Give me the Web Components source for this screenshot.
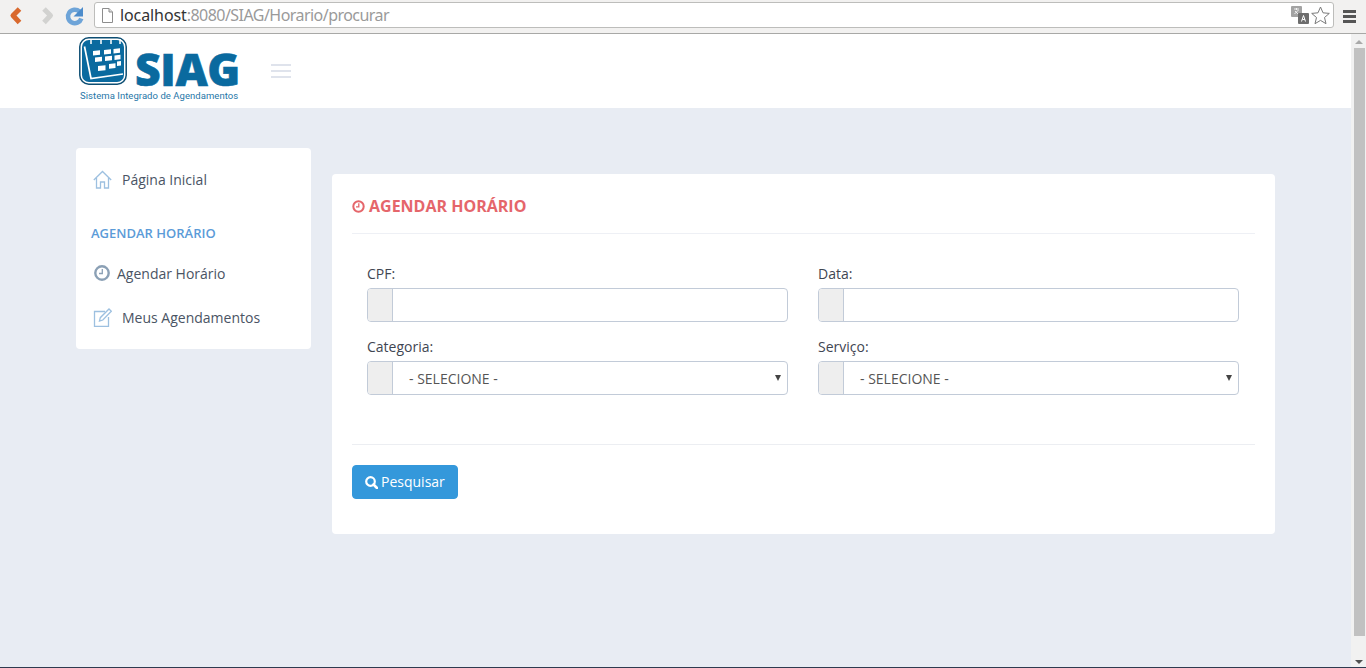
<!DOCTYPE html>
<html lang="pt"><head><meta charset="utf-8"><title>SIAG</title>
<style>
html,body{margin:0;height:668px;overflow:hidden;background:#e8ecf3}
body{display:grid;grid-template-rows:34px 633px 1px;font-family:"Open Sans",sans-serif;font-size:14px;color:#4a5464}
app-shell{min-height:0}
</style></head><body>
<browser-bar></browser-bar>
<app-shell>
  <site-header></site-header>
  <side-nav slot="content"></side-nav>
  <schedule-card slot="content"></schedule-card>
</app-shell>
<div style="background:#2f3a4f"></div>
<script>
function def(name,html){
  customElements.define(name,class extends HTMLElement{
    constructor(){super();this.attachShadow({mode:'open'}).innerHTML=html}
  });
}
def('browser-bar',`<style>
:host{display:flex;align-items:flex-start;height:34px;box-sizing:border-box;background:#f2f1f0;border-bottom:1px solid #a8a8a6}
.nav{width:94px;height:32px;flex:none}
.nav svg{display:block}
.url{margin-top:2px;width:1240px;height:26px;box-sizing:border-box;background:#fff;border:1px solid #bdbdbb;border-radius:3px;display:flex;align-items:center;padding:0 3px 0 6px;flex:none}
.path{margin-left:6px;font:16px/24px "Noto Sans","Open Sans",sans-serif;color:#9a9a9a;white-space:nowrap;flex:1;letter-spacing:-.54px}
.path b{font-weight:400;color:#333;letter-spacing:-.1px}
.menu{margin:10px 0 0 9px;width:13px;flex:none;display:grid;gap:2px}
.menu i{display:block;height:3px;background:#555}
</style>
<div class="nav">
<svg width="94" height="32" viewBox="0 0 94 32">
<path d="M19.500 9 13 15.500l6.500 7" fill="none" stroke="#d9692e" stroke-width="5" stroke-linejoin="round"/>
<path d="M44 9l6.500 6.500L44 22.500" fill="none" stroke="#d2d2d0" stroke-width="5" stroke-linejoin="round"/>
<path d="M79.500 11.500a6.800 6.800 0 1 0 1.800 7" fill="none" stroke="#6ea4d8" stroke-width="4.500"/>
<path d="M83 7v9.500h-9.500z" fill="#4d8ccb"/>
</svg></div>
<div class="url">
<svg width="13" height="15" viewBox="0 0 13 15"><path d="M1.500 .5h6.500l3.500 3.500v10.500h-10z" fill="#fff" stroke="#8d8d8d"/><path d="M8 .5v3.500h3.500" fill="#ddd" stroke="#8d8d8d"/></svg>
<span class="path"><b>localhost</b>:8080/SIAG/Horario/procurar</span>
<svg width="18" height="18" viewBox="0 0 18 18"><rect x="0" y="0" width="11" height="11" rx="1" fill="#a3a3a3"/><rect x="7" y="7" width="11" height="11" rx="1" fill="#6d6d6d"/><path d="M3 3h5M5.500 2v2M3.500 8 7.500 4M4 5l3 3" stroke="#fff" stroke-width=".8" fill="none"/><path d="M10.500 15.500l2-6 2 6M11.300 13.500h2.600" stroke="#fff" fill="none"/></svg>
<svg style="margin-left:2px" width="19" height="19" viewBox="0 0 19 19"><path d="M9.500 1l2.500 5.800 6.300.6-4.800 4.100 1.500 6.200-5.500-3.300-5.500 3.300 1.500-6.200L.7 7.400 7 6.800z" fill="#fff" stroke="#7a7a7a"/></svg>
</div>
<div class="menu"><i></i><i></i><i></i></div>`);

def('app-shell',`<style>
:host{display:grid;grid-template-columns:1351px 15px;height:633px;overflow:hidden}
.page{display:flex;flex-direction:column;background:#e8ecf3;min-height:0}
.cols{display:flex;align-items:flex-start;padding:40px 0 0 76px;gap:21px}
.bar{background:#f1f1f1;display:flex;flex-direction:column;align-items:center}
.thumb{width:11px;height:588px;background:#c1c1c1;margin-top:4px;margin-left:1px}
.up,.down{width:0;height:0;border-left:4px solid transparent;border-right:4px solid transparent;margin-left:1px}
.up{border-bottom:4px solid #a9a9a9;margin-top:6px}
.down{border-top:4px solid #505050;margin-top:24px}
</style>
<div class="page"><slot></slot><div class="cols"><slot name="content"></slot></div></div>
<div class="bar"><div class="up"></div><div class="thumb"></div><div class="down"></div></div>`);

def('site-header',`<style>
:host{display:flex;align-items:flex-start;height:74px;background:#fff;padding-left:79px;box-sizing:border-box}
.logo{display:grid;grid-template-columns:49px auto;width:160px;column-gap:7px;padding-top:3px}
.logo svg{display:block}
.name{font:800 44.500px/34px "Open Sans","Liberation Sans",sans-serif;color:#0a6a9f;letter-spacing:-.4px;margin-top:15px;height:33px;-webkit-text-stroke:.6px #0a6a9f;white-space:nowrap}
.sub{grid-column:1/3;font:400 9.500px/11px Roboto,"Open Sans",sans-serif;color:#1f77a8;white-space:nowrap;margin-top:5px;padding-left:1px;letter-spacing:.05px}
.burger{margin:30px 0 0 32px;display:grid;gap:4px;width:20px}
.burger i{display:block;height:2px;background:#dfe3ec}
</style>
<div class="logo">
<svg width="49" height="48" viewBox="0 0 49 48">
<rect x=".8" y=".8" width="46.400" height="46.400" rx="9" fill="#fff" stroke="#0d4e73" stroke-width="1.500"/>
<rect x="3" y="3" width="42" height="42" rx="7" fill="#0a6a9f"/>
<path d="M5.500 9.500 12 41.500 44 37" fill="none" stroke="#fff" stroke-width="1.700"/>
<path d="M12 2v5M22 2v5M32 2v5M41 2v5" stroke="#fff" stroke-width="1.500"/>
<g fill="#fff"><path d="M14 14l7-.7v4.500l-7 .7zM25 13l7-.7v4.500l-7 .7zM34.500 12l6.500-.7v4.500l-6.500 .7zM16 20.500l7-.7v4.500l-7 .7zM26 19.500l7-.7v4.500l-7 .7zM35.500 18.500l6-.7v4.500l-6 .7zM19 29l7.500-.8v5l-7.500 .8zM30 27l6.500-.8v4.800l-6.500 .8zM38 24.500l4-.5v4.500l-4 .5z"/></g>
</svg>
<div class="name">SIAG</div>
<div class="sub">Sistema Integrado de Agendamentos</div>
</div>
<div class="burger"><i></i><i></i><i></i></div>`);

def('nav-item',`<style>
:host{display:flex;align-items:center;height:44px;color:#4a5464;font-size:14px;white-space:nowrap}
::slotted(svg){flex:none}
</style><slot></slot>`);

def('side-nav',`<style>
:host{display:block;width:235px;height:201px;box-sizing:border-box;background:#fff;border-radius:4px;padding:9px 0 0 15px;flex:none}
h4{margin:23px 0 0;font:600 13px/18px "Open Sans",sans-serif;color:#5b9bd8;height:27px}
nav-item{padding-left:2px}
.c{padding-left:3px}
.t{margin-left:10px}
.t2{margin-left:7px}
</style>
<nav-item><svg width="19" height="19" viewBox="0 0 19 19" fill="none" stroke="#9dc0e0" stroke-width="1.300"><path d="M.8 10 9.500 1.500 18.200 10M3.500 8v10h4v-6h4v6h4V8"/></svg><span class="t">Página Inicial</span></nav-item>
<h4>AGENDAR HORÁRIO</h4>
<nav-item class="c"><svg style="margin-top:-1px" width="16" height="16" viewBox="0 0 16 16"><circle cx="8" cy="8" r="6.700" fill="none" stroke="#8ba0b5" stroke-width="2.400"/><path d="M8.300 4v4.500H5" fill="none" stroke="#8ba0b5" stroke-width="1.300"/></svg><span class="t2">Agendar Horário</span></nav-item>
<nav-item><svg width="19" height="19" viewBox="0 0 19 19" fill="none" stroke="#9dc0e0" stroke-width="1.300"><path d="M12 3.500H1.500v15h14V9"/><path d="M6.500 13l.8-3.300L16 1l2.300 2.300L9.800 12z"/></svg><span class="t">Meus Agendamentos</span></nav-item>`);

const fieldTpl=document.createElement('template');
fieldTpl.innerHTML=`<style>
:host{display:block;padding:0 15px;min-width:0}
label{display:block;font:14px/22px "Open Sans",sans-serif;color:#3f4652;height:25px}
.box{display:flex;height:34px;box-sizing:border-box;border:1px solid #c2cbd8;border-radius:4px;overflow:hidden;background:#fff;align-items:center}
.add{width:24px;height:100%;background:#eee;border-right:1px solid #c2cbd8;flex:none}
input{flex:1;min-width:0;border:0;outline:0;background:none;height:100%;padding:0;font:inherit}
.val{flex:1;padding-left:16px;font:14px "Open Sans",sans-serif;color:#555;white-space:nowrap}
.arr{width:0;height:0;border-left:3px solid transparent;border-right:3px solid transparent;border-top:6px solid #444;margin-right:6px}
</style>
<label></label><div class="box"><span class="add"></span></div>`;
customElements.define('form-field',class extends HTMLElement{
  constructor(){super();this.attachShadow({mode:'open'}).append(fieldTpl.content.cloneNode(true))}
  connectedCallback(){
    const s=this.shadowRoot;
    s.querySelector('label').textContent=this.getAttribute('label');
    const box=s.querySelector('.box');
    if(box.children.length>1)return;
    if(this.hasAttribute('value')){
      const v=document.createElement('span');v.className='val';v.textContent=this.getAttribute('value');
      const a=document.createElement('span');a.className='arr';box.append(v,a);
    }else box.append(document.createElement('input'));
  }
});

def('schedule-card',`<style>
:host{display:block;width:943px;height:360px;box-sizing:border-box;margin-top:26px;background:#fff;border-radius:4px;padding:0 20px;flex:none}
h3{margin:0;height:60px;box-sizing:border-box;padding-top:21px;border-bottom:1px solid #eef0f5;font:700 16px/22px "Open Sans",sans-serif;color:#e5666b;display:flex;align-items:flex-start;gap:4px;white-space:nowrap}
h3 svg{margin-top:5px}
.grid{display:grid;grid-template-columns:451px 451px;row-gap:14px;padding-top:29px;height:211px;box-sizing:border-box;border-bottom:1px solid #eceef2;align-content:start}
button{display:flex;align-items:center;gap:3px;margin-top:20px;width:106px;height:34px;border:1px solid #3498db;border-radius:4px;background:#3498db;color:#fff;font:14px "Open Sans",sans-serif;padding:0 0 2px 12px;box-sizing:border-box}
</style>
<h3><svg width="13" height="13" viewBox="0 0 13 13"><circle cx="6.500" cy="6.500" r="5.200" fill="none" stroke="#e5666b" stroke-width="2"/><path d="M6.800 3.300v3.500H4" fill="none" stroke="#e5666b" stroke-width="1.300"/></svg>AGENDAR HORÁRIO</h3>
<div class="grid">
<form-field label="CPF:"></form-field><form-field label="Data:"></form-field>
<form-field label="Categoria:" value="- SELECIONE -"></form-field><form-field label="Serviço:" value="- SELECIONE -"></form-field>
</div>
<button><svg width="13" height="13" viewBox="0 0 13 13" style="margin-top:2px"><circle cx="5.500" cy="5.500" r="4.300" fill="none" stroke="#fff" stroke-width="2.200"/><path d="M8.500 8.500l3.500 3.500" stroke="#fff" stroke-width="2.600" stroke-linecap="round"/></svg>Pesquisar</button>`);
</script>
</body></html>
